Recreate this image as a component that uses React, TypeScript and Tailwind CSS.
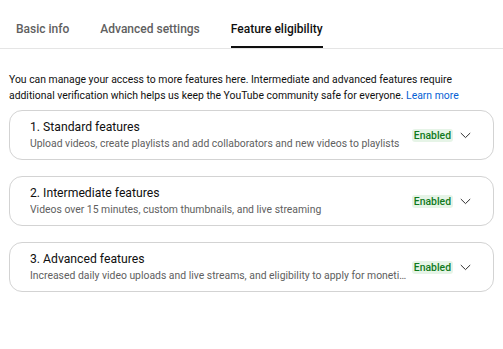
import React from "react"

const tabs = ["Basic info", "Advanced settings", "Feature eligibility"]

const features = [
  {
    title: "1. Standard features",
    desc: "Upload videos, create playlists and add collaborators and new videos to playlists",
  },
  {
    title: "2. Intermediate features",
    desc: "Videos over 15 minutes, custom thumbnails, and live streaming",
  },
  {
    title: "3. Advanced features",
    desc: "Increased daily video uploads and live streams, and eligibility to apply for monetization features",
  },
]

function Chevron() {
  return (
    <svg width="11" height="7" viewBox="0 0 11 7" fill="none" className="shrink-0">
      <path d="M0.8 1 L5.5 5.6 L10.2 1" stroke="#303030" strokeWidth="1" />
    </svg>
  )
}

export default function App() {
  return (
    <div
      className="w-[503px] h-[349px] bg-white text-[#0f0f0f] overflow-hidden"
      style={{ fontFamily: "Roboto, 'Liberation Sans', sans-serif" }}
    >
      {/* Tabs */}
      <div className="flex gap-[31px] pl-4 h-[49px] border-b border-[#e5e5e5]">
        {tabs.map((t, i) => {
          const active = i === 2
          return (
            <div
              key={t}
              className={`flex items-center text-[12px] font-medium border-b-2 h-full pt-[11px] ${
                active ? "border-[#0f0f0f] text-[#0f0f0f]" : "border-transparent text-[#606060]"
              }`}
            >
              {t}
            </div>
          )
        })}
      </div>

      {/* Intro */}
      <p className="px-[9px] pt-[23px] text-[10.4px] leading-4 text-[#0f0f0f]">
        You can manage your access to more features here. Intermediate and advanced features require
        <br />
        additional verification which helps us keep the YouTube community safe for everyone.{" "}
        <span className="text-[#065fd4]">Learn more</span>
      </p>

      {/* Feature cards */}
      <div className="flex flex-col gap-4 px-[9px] pt-[6px]">
        {features.map((f) => (
          <div
            key={f.title}
            className="flex items-center h-[50px] border border-[#d3d3d3] rounded-[13px] pl-5 pr-[22px]"
          >
            <div className="flex-1 min-w-0 pr-[3px]">
              <div className="text-[12.2px] leading-[18px] text-[#0f0f0f]">{f.title}</div>
              <div className="text-[10.4px] leading-4 text-[#606060] truncate">{f.desc}</div>
            </div>
            <div className="flex items-center gap-[7px]">
              <span className="bg-[#e6f4e7] text-[#107a1c] text-[10.4px] font-medium leading-[13px] px-[2px] rounded-[3px]">
                Enabled
              </span>
              <Chevron />
            </div>
          </div>
        ))}
      </div>
    </div>
  )
}
